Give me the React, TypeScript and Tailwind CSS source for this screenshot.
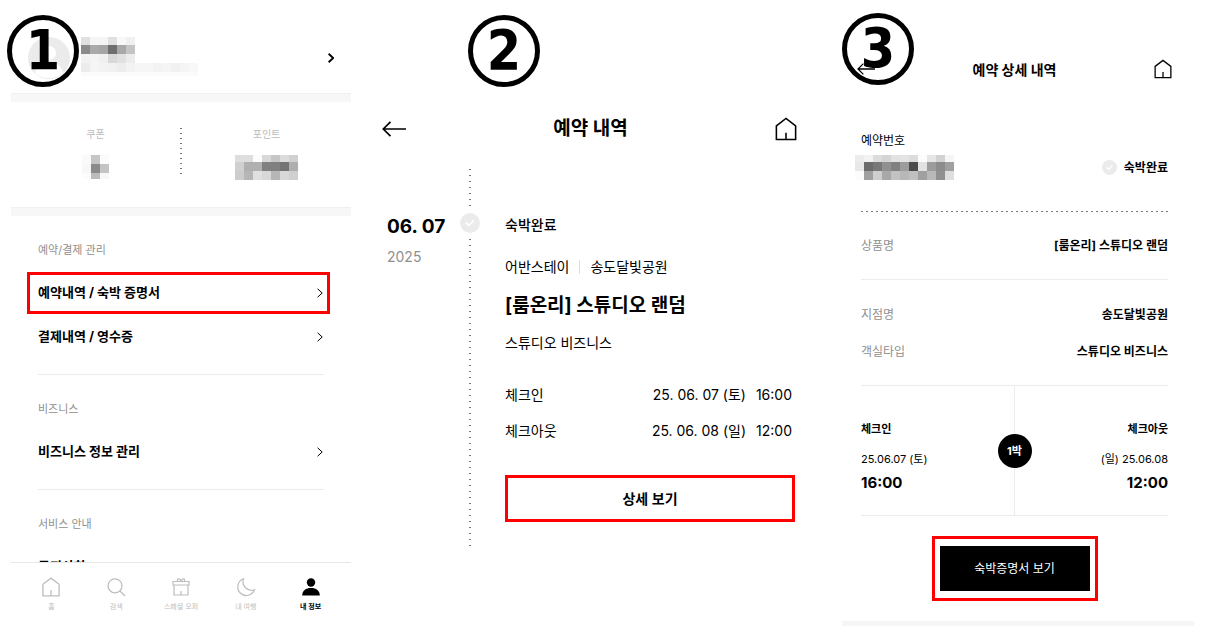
import React from "react";

interface IconProps {
  className?: string;
}

interface MosaicProps {
  rows: { h: number; cells: string[] }[];
}

const CELL = 9;

// Pixelated block that hides personal data, one hex byte of grey per cell
function Mosaic({ rows }: MosaicProps) {
  const width = Math.max(...rows.map((r) => r.cells.length)) * CELL;
  const height = rows.reduce((sum, r) => sum + r.h, 0);
  let top = 0;

  return (
    <svg width={width} height={height} shapeRendering="crispEdges" aria-hidden="true" className="shrink-0">
      {rows.map((row, r) => {
        const y = top;
        top += row.h;
        return row.cells.map((c, i) => (
          <rect key={`${r}-${i}`} x={i * CELL} y={y} width={CELL} height={row.h} fill={`#${c}${c}${c}`} />
        ));
      })}
    </svg>
  );
}

const nameMosaic = [
  { h: 8, cells: ["e0", "f5", "f5", "e0", "f8", "f0"] },
  { h: 9, cells: ["8b", "aa", "a5", "6e", "a8", "c4"] },
  { h: 9, cells: ["f2", "f4", "f0", "d8", "e0", "ec"] },
  { h: 9, cells: ["ec", "f5", "f3", "f1", "ed", "f3", "f6", "f6", "f3", "f5", "f1", "f5", "f8"] },
  { h: 4, cells: ["fb", "fb", "fb", "fb", "fb", "fb", "fb", "fb", "fb", "fb", "fb", "fb", "fb"] },
  { h: 3, cells: [] },
];

const couponMosaic = [
  { h: 9, cells: ["fa", "c6", "fb"] },
  { h: 9, cells: ["f7", "8a", "c4"] },
  { h: 6, cells: ["fc", "bb", "f7"] },
];

const pointMosaic = [
  { h: 7, cells: ["de", "de", "fc", "d8", "c6", "dc", "d0"] },
  { h: 9, cells: ["d0", "b0", "b0", "80", "80", "74", "ae"] },
  { h: 9, cells: ["cc", "b6", "e0", "d8", "b6", "d8", "d0"] },
];

const bookingMosaic = [
  { h: 7, cells: ["ec", "f2", "dc", "d4", "e2", "e4", "dc", "fc", "e6", "d2", "f6"] },
  { h: 9, cells: ["e8", "6c", "78", "90", "80", "9c", "4c", "e2", "9c", "8c", "a0"] },
  { h: 9, cells: ["fc", "a0", "ce", "a8", "c2", "b8", "c0", "a0", "b8", "90", "de"] },
];

function HomeIcon({ className }: IconProps) {
  return (
    <svg viewBox="0 0 24 26" fill="none" stroke="currentColor" strokeWidth="1.7" className={className}>
      <path d="M1.5 9.5 12 1.5l10.500 8V24.500h-21Z" />
      <path d="M12 24.500V17" />
    </svg>
  );
}

function BackIcon({ className }: IconProps) {
  return (
    <svg viewBox="0 0 24 16" fill="none" stroke="currentColor" strokeWidth="1.7" className={className}>
      <path d="M24 8H1.500M8.500 .8 1.300 8l7.200 7.200" />
    </svg>
  );
}

function ChevronIcon({ className }: IconProps) {
  return (
    <svg viewBox="0 0 6 10" fill="none" stroke="currentColor" strokeWidth="1" className={className}>
      <path d="M.6 .8 5.200 5 .6 9.200" />
    </svg>
  );
}

function CheckIcon({ className }: IconProps) {
  return (
    <svg viewBox="0 0 20 20" className={className}>
      <circle cx="10" cy="10" r="10" fill="#ebebeb" />
      <path d="m5.800 9.500 3 3 5-5.200" fill="none" stroke="#fff" strokeWidth="1.8" />
    </svg>
  );
}

function SearchIcon({ className }: IconProps) {
  return (
    <svg viewBox="0 0 20 20" fill="none" stroke="currentColor" strokeWidth="1.2" className={className}>
      <circle cx="9" cy="8.800" r="7" />
      <path d="m14 14 5 5" />
    </svg>
  );
}

function GiftIcon({ className }: IconProps) {
  return (
    <svg viewBox="0 0 20 20" fill="none" stroke="currentColor" strokeWidth="1.2" className={className}>
      <path d="M2 4.500h16v3.500H2ZM3 8v10h14V8M10 18v-4" />
      <path d="M10 4.500C9.500 2.500 8.500 1.800 7.500 1.800S6 3.200 6.800 4.500M10 4.500c.5-2 1.500-2.700 2.500-2.700s1.500 1.400.7 2.700" />
    </svg>
  );
}

function MoonIcon({ className }: IconProps) {
  return (
    <svg viewBox="0 0 20 20" fill="none" stroke="currentColor" strokeWidth="1.2" className={className}>
      <path d="M7.500 1.800A8.600 8.600 0 1 0 18.500 12.800 8.600 8.600 0 0 1 7.500 1.800Z" />
    </svg>
  );
}

function UserIcon({ className }: IconProps) {
  return (
    <svg viewBox="0 0 20 20" fill="currentColor" className={className}>
      <circle cx="10" cy="5.500" r="4.200" />
      <path d="M1.200 18.500C1.200 13.500 4.800 11 10 11s8.800 2.500 8.800 7.500Z" />
    </svg>
  );
}

function AvatarIcon({ className }: IconProps) {
  return (
    <svg viewBox="0 0 42 42" className={className}>
      <circle cx="21" cy="21" r="21" fill="#ebebeb" />
      <circle cx="21" cy="16" r="7" fill="#fff" />
      <path d="M7 36c2-8 7-11 14-11s12 3 14 11c-8 7-20 7-28 0Z" fill="#fff" />
    </svg>
  );
}

function StepNumber({ value }: { value: number }) {
  return (
    <span className="flex h-[72px] w-[72px] items-center justify-center rounded-full border-5 border-black pb-[2px] font-['DejaVu_Sans_Condensed','DejaVu_Sans',sans-serif] text-[55px] leading-none font-bold">
      {value}
    </span>
  );
}

const menuSections = [
  { title: "예약/결제 관리", items: ["예약내역 / 숙박 증명서", "결제내역 / 영수증"] },
  { title: "비즈니스", items: ["비즈니스 정보 관리"] },
  { title: "서비스 안내", items: ["공지사항"] },
];

const tabs = [
  { label: "홈", Icon: HomeIcon },
  { label: "검색", Icon: SearchIcon },
  { label: "스페셜 오퍼", Icon: GiftIcon },
  { label: "내 여행", Icon: MoonIcon },
  { label: "내 정보", Icon: UserIcon },
];

function MyPage() {
  return (
    <section className="relative flex h-screen flex-col px-[11px]">
      <div className="min-h-0 flex-1 overflow-hidden">
        <header className="flex h-[93px] items-center px-[17px] pt-[22px]">
          <AvatarIcon className="h-[42px] w-[42px] shrink-0" />
          <div className="ml-[11px] flex-1">
            <Mosaic rows={nameMosaic} />
          </div>
          <button type="button" aria-label="프로필">
            <ChevronIcon className="h-[10px] w-[6px] stroke-2" />
          </button>
        </header>

        <div className="h-[9px] border-t border-[#f0f0f0] bg-[#f7f7f7]" />

        <div className="flex h-[105px] items-center pb-[3px]">
          <div className="flex flex-1 flex-col items-center">
            <span className="text-[10px] leading-4 text-[#bbb]">쿠폰</span>
            <div className="mt-3 flex h-[26px] items-center">
              <Mosaic rows={couponMosaic} />
            </div>
          </div>
          <div className="h-[50px] w-[2px] bg-[repeating-linear-gradient(to_bottom,#777_0_1px,transparent_1px_5px)]" />
          <div className="flex flex-1 flex-col items-center">
            <span className="text-[10px] leading-4 text-[#bbb]">포인트</span>
            <div className="mt-3 flex h-[26px] items-center">
              <Mosaic rows={pointMosaic} />
            </div>
          </div>
        </div>

        <div className="h-[9px] border-t border-[#f0f0f0] bg-[#f7f7f7]" />

        {menuSections.map((section, s) => (
          <div key={section.title} className="pr-[21px] pl-4">
            {s > 0 && <hr className="mt-4 mr-[6px] ml-[11px] border-[#ececec]" />}
            <h2 className="mb-3 pt-6 pl-[11px] text-[11px] leading-5 text-[#8f8f8f]">{section.title}</h2>
            {section.items.map((item, i) => (
              <button
                key={item}
                type="button"
                className={`mb-[2px] flex h-[42px] w-full items-center justify-between border-3 pr-1 pl-2 text-[13px] font-bold ${
                  s === 0 && i === 0 ? "border-[#f00]" : "border-transparent"
                }`}
              >
                {item}
                <ChevronIcon className="h-[10px] w-[6px]" />
              </button>
            ))}
          </div>
        ))}
      </div>

      <nav className="flex h-[81px] shrink-0 border-t border-[#e8e8e8] px-2 pt-[14px]">
        {tabs.map(({ label, Icon }) => (
          <a
            key={label}
            href="#"
            className={`flex flex-1 flex-col items-center gap-[3px] text-[7px] leading-[14px] ${
              label === "내 정보" ? "font-bold text-black" : "text-[#bdbdbd]"
            }`}
          >
            <Icon className="h-5 w-5" />
            {label}
          </a>
        ))}
      </nav>

      <div className="absolute top-[15px] left-[7px]">
        <StepNumber value={1} />
      </div>
    </section>
  );
}

function BookingList() {
  return (
    <section className="relative pt-[105px]">
      <header className="flex h-12 items-center justify-between pr-[33px] pl-5">
        <button type="button" aria-label="뒤로">
          <BackIcon className="h-4 w-6" />
        </button>
        <h1 className="text-[19px] font-bold">예약 내역</h1>
        <a href="#" aria-label="홈">
          <HomeIcon className="h-6 w-[22px]" />
        </a>
      </header>

      <div className="mt-4 flex pr-[35px] pl-[25px]">
        <div className="w-[73px] shrink-0 pt-[46px]">
          <p className="text-[19px] leading-6 font-bold">06. 07</p>
          <p className="mt-2 text-[14px] leading-5 text-[#8f8f8f]">2025</p>
        </div>

        <div className="flex w-5 shrink-0 flex-col items-center">
          <div className="h-[38px] w-[2px] bg-[repeating-linear-gradient(to_bottom,#777_0_1px,transparent_1px_6px)]" />
          <CheckIcon className="my-[6px] h-5 w-5" />
          <div className="w-[2px] flex-1 bg-[repeating-linear-gradient(to_bottom,#777_0_1px,transparent_1px_6px)]" />
        </div>

        <div className="ml-[25px] flex-1 pt-[46px] pb-6 text-[14px] leading-5">
          <p className="font-medium">숙박완료</p>
          <p className="mt-[22px] flex items-center gap-[10px]">
            어반스테이
            <span className="h-[14px] w-px bg-[#ddd]" />
            송도달빛공원
          </p>
          <h2 className="mt-[15px] text-[19px] leading-7 font-bold">[룸온리] 스튜디오 랜덤</h2>
          <p className="mt-[13px]">스튜디오 비즈니스</p>
          <dl className="mt-8 flex flex-col gap-4">
            <div className="flex justify-between">
              <dt>체크인</dt>
              <dd className="flex gap-[10px] pr-[3px]">
                <span>25. 06. 07 (토)</span>
                <span>16:00</span>
              </dd>
            </div>
            <div className="flex justify-between">
              <dt>체크아웃</dt>
              <dd className="flex gap-[10px] pr-[3px]">
                <span>25. 06. 08 (일)</span>
                <span>12:00</span>
              </dd>
            </div>
          </dl>
          <button type="button" className="mt-[34px] h-[47px] w-full border-3 border-[#f00] font-semibold">
            상세 보기
          </button>
        </div>
      </div>

      <div className="absolute top-[15px] left-[106px]">
        <StepNumber value={2} />
      </div>
    </section>
  );
}

function BookingDetail() {
  return (
    <section className="relative pt-[45px]">
      <header className="flex h-12 items-center justify-between pr-[42px] pl-[27px]">
        <button type="button" aria-label="뒤로">
          <BackIcon className="h-3 w-[18px]" />
        </button>
        <h1 className="text-[14px] font-bold">예약 상세 내역</h1>
        <a href="#" aria-label="홈">
          <HomeIcon className="h-5 w-[18px]" />
        </a>
      </header>

      <div className="flex flex-col pt-[38px] pr-[46px] pl-[31px] text-[12px] leading-5">
        <p>예약번호</p>
        <div className="mt-1 -ml-1.5 flex h-[25px] items-center justify-between">
          <Mosaic rows={bookingMosaic} />
          <span className="flex items-center gap-[7px] font-bold">
            <CheckIcon className="h-[15px] w-[15px]" />
            숙박완료
          </span>
        </div>

        <div className="mt-[31px] h-px bg-[repeating-linear-gradient(to_right,#777_0_2px,transparent_2px_5px)]" />

        <dl>
          <div className="flex h-[68px] items-center justify-between border-b border-[#ececec]">
            <dt className="text-[#8f8f8f]">상품명</dt>
            <dd className="font-bold">[룸온리] 스튜디오 랜덤</dd>
          </div>
          <div className="border-b border-[#ececec] pt-4 pb-[15px]">
            <div className="flex h-[37px] items-center justify-between">
              <dt className="text-[#8f8f8f]">지점명</dt>
              <dd className="font-bold">송도달빛공원</dd>
            </div>
            <div className="flex h-[37px] items-center justify-between">
              <dt className="text-[#8f8f8f]">객실타입</dt>
              <dd className="font-bold">스튜디오 비즈니스</dd>
            </div>
          </div>
        </dl>

        <div className="relative grid grid-cols-2 border-b border-[#ececec] text-[11px] leading-4">
          <div className="border-r border-[#ececec] pt-[35px] pb-[22px]">
            <p className="font-bold">체크인</p>
            <p className="mt-[14px]">25.06.07 (토)</p>
            <p className="mt-[6px] text-[15px] leading-5 font-bold">16:00</p>
          </div>
          <div className="pt-[35px] pb-[22px] text-right">
            <p className="font-bold">체크아웃</p>
            <p className="mt-[14px]">(일) 25.06.08</p>
            <p className="mt-[6px] text-[15px] leading-5 font-bold">12:00</p>
          </div>
          {/* Nights badge over the divider */}
          <span className="absolute top-1/2 left-1/2 flex h-[34px] w-[34px] -translate-1/2 items-center justify-center rounded-full bg-black font-bold text-white">
            1박
          </span>
        </div>

        <div className="mt-5 self-center border-3 border-[#f00] px-[5px] py-[7px]">
          <button type="button" className="h-[45px] w-[150px] bg-black text-white">
            숙박증명서 보기
          </button>
        </div>
      </div>

      <div className="mt-5 mr-5 ml-3 h-[5px] bg-[#f6f6f6]" />

      <div className="absolute top-[13px] left-3">
        <StepNumber value={3} />
      </div>
    </section>
  );
}

export default function App() {
  return (
    <main className="grid min-h-screen grid-cols-[362fr_468fr_384fr] overflow-hidden bg-white font-['Inter','Noto_Sans_CJK_KR',sans-serif] text-black">
      <MyPage />
      <BookingList />
      <BookingDetail />
    </main>
  );
}
